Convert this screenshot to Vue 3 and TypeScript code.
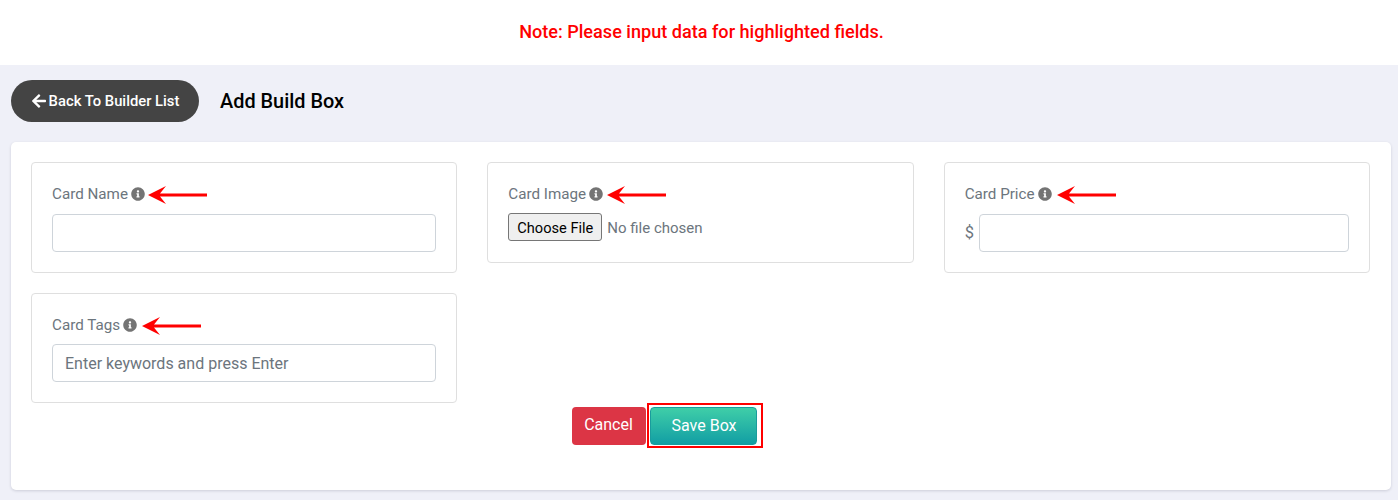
<script setup lang="ts">
interface Field { label: string; kind: 'text' | 'file' | 'price' | 'tags'; arrowGap: number }
const fields: Field[] = [
  { label: 'Card Name', kind: 'text', arrowGap: 3 },
  { label: 'Card Image', kind: 'file', arrowGap: 4 },
  { label: 'Card Price', kind: 'price', arrowGap: 5 },
  { label: 'Card Tags', kind: 'tags', arrowGap: 5 },
]
</script>

<template>
  <div class="page">
    <div class="note">Note: Please input data for highlighted fields.</div>
    <div class="head">
      <button class="back" type="button">
        <svg class="back-ico" viewBox="0 0 448 512"><path fill="#fff" d="M257.5 445.1l-22.2 22.2c-9.4 9.4-24.6 9.4-33.9 0L7 273c-9.4-9.4-9.4-24.6 0-33.9L201.4 44.7c9.4-9.4 24.6-9.4 33.9 0l22.2 22.2c9.5 9.5 9.3 25-.4 34.3L136.6 216H424c13.3 0 24 10.7 24 24v32c0 13.3-10.7 24-24 24H136.6l120.5 114.8c9.8 9.3 10 24.8.4 34.3z"/></svg>
        Back To Builder List
      </button>
      <h1 class="title">Add Build Box</h1>
    </div>
    <div class="card">
      <div class="grid">
        <div v-for="f in fields" :key="f.label" class="box" :class="'box-' + f.kind">
          <div class="label">
            <span>{{ f.label }}</span>
            <svg class="info" viewBox="0 0 512 512"><path fill="#747474" d="M256 8C119.043 8 8 119.083 8 256c0 136.997 111.043 248 248 248s248-111.003 248-248C504 119.083 392.957 8 256 8zm0 110c23.196 0 42 18.804 42 42s-18.804 42-42 42-42-18.804-42-42 18.804-42 42-42zm56 254c0 6.627-5.373 12-12 12h-88c-6.627 0-12-5.373-12-12v-24c0-6.627 5.373-12 12-12h12v-64h-12c-6.627 0-12-5.373-12-12v-24c0-6.627 5.373-12 12-12h64c6.627 0 12 5.373 12 12v100h12c6.627 0 12 5.373 12 12v24z"/></svg>
            <svg class="arrow" :style="{ marginLeft: f.arrowGap + 'px' }" viewBox="0 0 60 18"><path fill="#f00" d="M0 9 L18 0 L12 7.5 H59 V10.5 H12 L18 18 Z"/></svg>
          </div>
          <input v-if="f.kind === 'text'" class="ctl" type="text" />
          <input v-else-if="f.kind === 'tags'" class="ctl" type="text" placeholder="Enter keywords and press Enter" />
          <input v-else-if="f.kind === 'file'" class="file" type="file" />
          <div v-else class="price">
            <span class="dollar">$</span>
            <input class="ctl" type="text" />
          </div>
        </div>
      </div>
      <div class="actions">
        <button class="btn cancel" type="button">Cancel</button>
        <span class="outline"><button class="btn save" type="button">Save Box</button></span>
      </div>
    </div>
  </div>
</template>

<style>
html, body { margin: 0; background: #eff0f8; }
</style>

<style scoped>
.page {
  font-family: Roboto, "Liberation Sans", sans-serif;
  width: 1398px;
  height: 500px;
  overflow: hidden;
  background: #eff0f8;
  box-sizing: border-box;
}
.note {
  height: 65px;
  box-sizing: border-box;
  padding-left: 5px;
  background: #fff;
  color: #f00;
  font-size: 18.1px;
  font-weight: 500;
  line-height: 63px;
  text-align: center;
}
.head {
  display: flex;
  align-items: center;
  gap: 21px;
  padding: 15px 11px 0;
  height: 42px;
}
.back {
  width: 188px;
  height: 42px;
  border: 0;
  border-radius: 21px;
  background: #444;
  color: #fff;
  font: 500 14.8px Roboto, sans-serif;
  padding: 0 0 0 1px;
  display: flex;
  align-items: center;
  justify-content: center;
  gap: 3px;
}
.back-ico { width: 14px; height: 16px; }
.title {
  margin: 0;
  font-size: 19.9px;
  font-weight: 500;
  color: #000;
}
.card {
  margin: 20px 7px 0 11px;
  height: 348px;
  box-sizing: border-box;
  padding: 20px 21px 20px 20px;
  background: #fff;
  border-radius: 5px;
  box-shadow: 0 1px 3px rgba(0, 0, 40, 0.15);
}
.grid {
  display: grid;
  grid-template-columns: repeat(3, 1fr);
  column-gap: 30px;
  row-gap: 20px;
  align-items: start;
}
.box {
  border: 1px solid #dfdfdf;
  border-radius: 4px;
  box-sizing: border-box;
  padding: 20px;
  height: 111px;
}
.box-file { height: 101px; }
.box-tags { height: 110px; }
.box-tags .label { margin-bottom: 8px; }
.label {
  display: flex;
  align-items: center;
  height: 22px;
  margin-bottom: 9px;
  color: #6c757d;
  font-size: 15.2px;
}
.info { width: 14px; height: 14px; margin-left: 3px; }
.arrow { width: 60px; height: 18px; margin-top: 1px; }
.ctl {
  display: block;
  width: 100%;
  height: 38px;
  box-sizing: border-box;
  padding: 6px 12px;
  border: 1px solid #ced4da;
  border-radius: 4px;
  background: #fff;
  font: 400 16px Roboto, sans-serif;
  color: #495057;
  outline: none;
}
.ctl::placeholder { color: #6c757d; opacity: 1; }
.file {
  display: block;
  font: 400 15px Roboto, sans-serif;
  color: #6c757d;
  margin-top: -1px;
}
.file::file-selector-button {
  width: 94px;
  height: 28px;
  padding: 1px 0 0;
  margin-right: 5px;
  font: 400 14.6px Roboto, sans-serif;
  color: #000;
  background: #efefef;
  border: 1px solid #767676;
  border-radius: 3px;
}
.price { display: flex; align-items: center; gap: 5px; }
.dollar { color: #6c757d; font-size: 16.5px; width: 9px; margin-top: -2px; }
.actions {
  display: flex;
  justify-content: center;
  align-items: center;
  gap: 1px;
  padding-right: 67px;
}
.outline {
  display: block;
  border: 2px solid #f00;
  padding: 2px 4px 1px 1px;
}
.btn {
  display: block;
  height: 38px;
  border: 1px solid transparent;
  border-radius: 4px;
  color: #fff;
  font: 400 16px Roboto, sans-serif;
  padding: 0 0 2px;
}
.cancel { width: 74px; background: #dc3545; }
.save { width: 107px; padding-left: 2px; background: linear-gradient(#3fcea8, #129ea4); border-color: #1a9c9c; }
</style>
